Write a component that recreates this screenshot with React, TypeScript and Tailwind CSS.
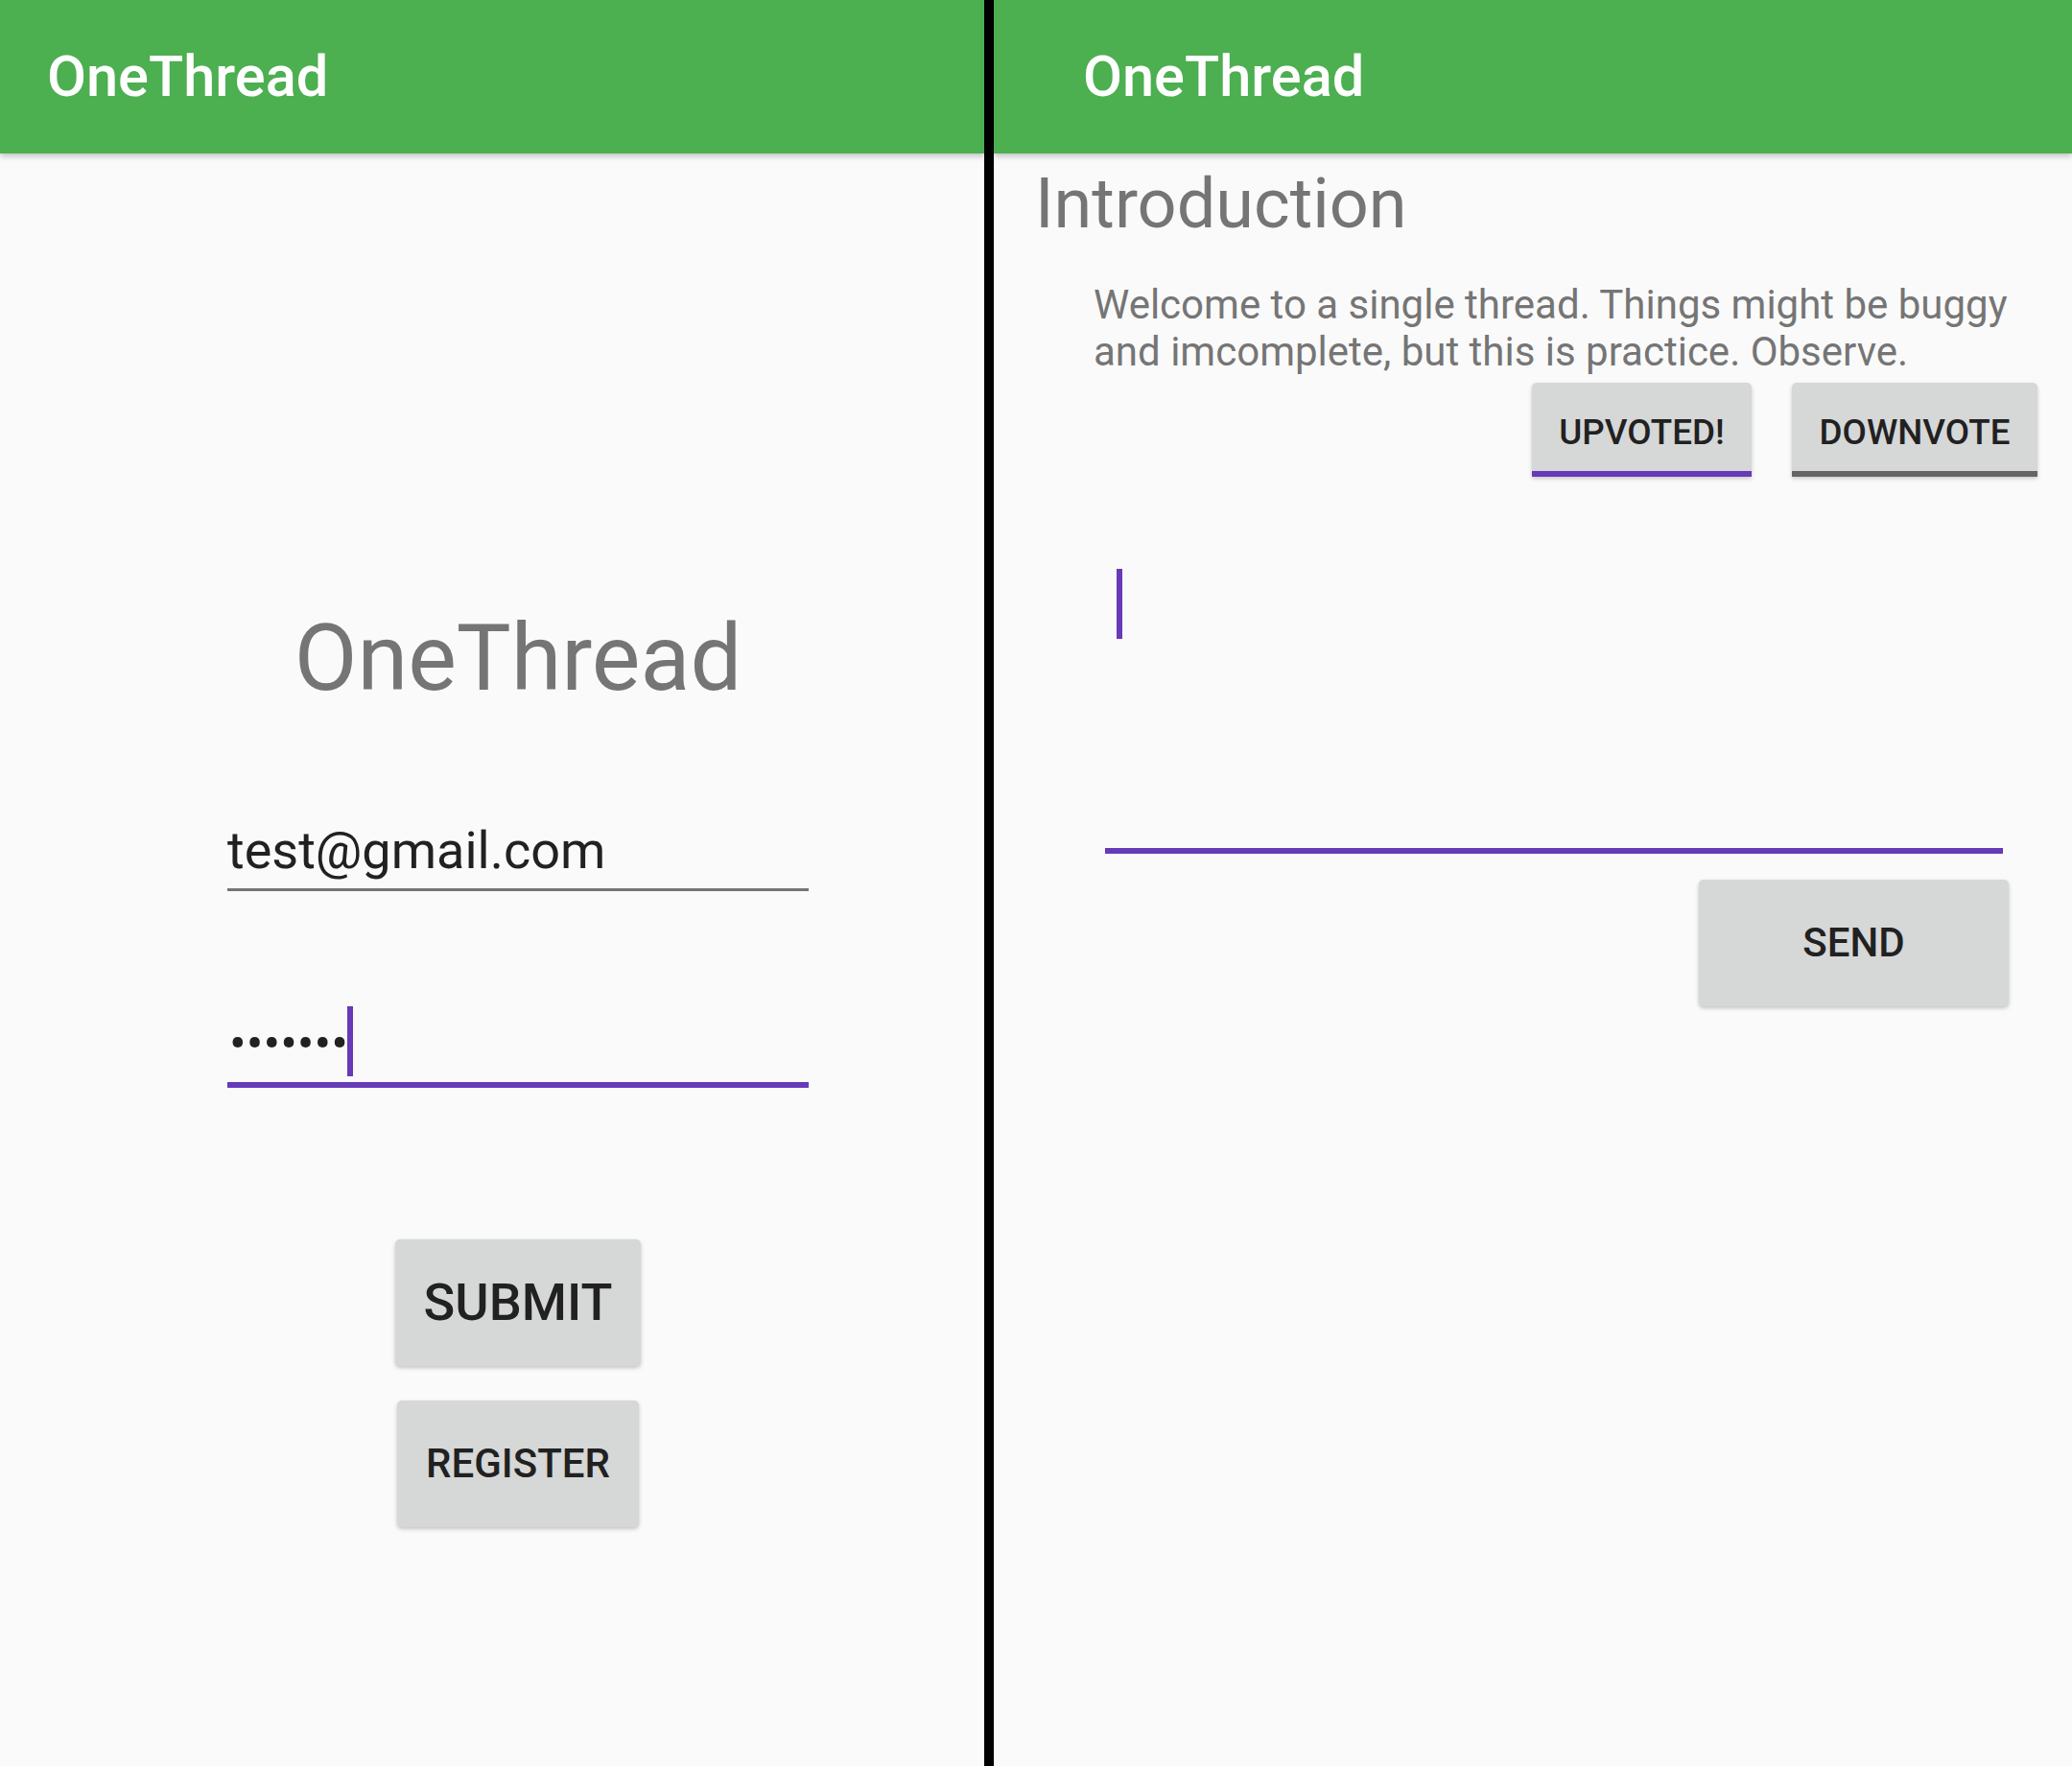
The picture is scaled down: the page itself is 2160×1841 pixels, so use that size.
import React from "react";

function Header({ pad }: { pad: string }) {
  return (
    <div
      className={`relative z-10 flex h-[160px] w-full shrink-0 items-center bg-[#4caf50] shadow-[0_3px_6px_rgba(0,0,0,0.22)] ${pad}`}
    >
      <span className="text-[59.5px] font-medium leading-[70px] text-white">OneThread</span>
    </div>
  );
}

function GrayButton({
  label,
  className,
  textClass,
}: {
  label: string;
  className: string;
  textClass: string;
}) {
  return (
    <div
      className={`flex items-center justify-center rounded-[5px] bg-[#d6d7d7] shadow-[0_2px_4px_rgba(0,0,0,0.22)] ${className}`}
    >
      <span className={`font-medium text-[#212121] ${textClass}`}>{label}</span>
    </div>
  );
}

function ToggleButton({ label, width, line }: { label: string; width: string; line: string }) {
  return (
    <div
      className={`flex h-[98px] flex-col overflow-hidden rounded-t-[5px] bg-[#d6d7d7] shadow-[0_2px_4px_rgba(0,0,0,0.2)] ${width}`}
    >
      <div className="flex flex-1 items-center justify-center pt-[10px]">
        <span className="text-[36.75px] font-medium leading-[43px] text-[#212121]">{label}</span>
      </div>
      <div className={`h-[6px] w-full ${line}`} />
    </div>
  );
}

export default function App() {
  return (
    <div className="flex h-[1841px] w-[2160px] overflow-hidden bg-[#fafafa] font-['Roboto','Liberation_Sans',sans-serif]">
      {/* Left phone: login */}
      <div className="flex h-full w-[1026px] shrink-0 flex-col overflow-hidden">
        <Header pad="pl-[49px]" />
        <div className="flex w-[1080px] flex-col items-center">
          <div className="mt-[471px] text-[95.5px] leading-[111px] text-[#757575]">OneThread</div>

          <div className="mt-[114px] flex w-[606px] flex-col">
            <div className="text-[54px] leading-[62px] text-[#212121]">test@gmail.com</div>
            <div className="mt-[8px] h-[3px] w-full bg-[#757575]" />
          </div>

          <div className="relative mt-[128px] flex w-[606px] flex-col">
            <div className="pl-[2px] text-[52.5px] leading-[62px] text-[#212121]">•••••••</div>
            <div className="absolute left-[125px] top-[-8px] h-[73px] w-[6px] bg-[#673ab7]" />
            <div className="mt-[9px] h-[6px] w-full bg-[#673ab7]" />
          </div>

          <GrayButton
            label="SUBMIT"
            className="mt-[158px] h-[132px] w-[256px]"
            textClass="text-[54px] leading-[64px]"
          />
          <GrayButton
            label="REGISTER"
            className="mt-[36px] h-[132px] w-[252px]"
            textClass="text-[42px] leading-[50px]"
          />
        </div>
      </div>

      {/* Divider */}
      <div className="h-full w-[10px] shrink-0 bg-black" />

      {/* Right phone: thread */}
      <div className="flex h-full flex-1 flex-col">
        <Header pad="pl-[93px]" />
        <div className="ml-[43px] mt-[11px] text-[72px] leading-[84px] text-[#757575]">Introduction</div>
        <p className="ml-[104px] mt-[38px] text-[42px] leading-[49px] text-[#757575]">
          Welcome to a single thread. Things might be buggy
          <br />
          and imcomplete, but this is practice. Observe.
        </p>
        <div className="mt-[8px] flex justify-end gap-[42px] pr-[36px]">
          <ToggleButton label="UPVOTED!" width="w-[229px]" line="bg-[#673ab7]" />
          <ToggleButton label="DOWNVOTE" width="w-[256px]" line="bg-[#646464]" />
        </div>

        <div className="relative ml-[116px] mt-[96px] flex h-[297px] w-[936px] flex-col justify-end">
          <div className="absolute left-[12px] top-0 h-[73px] w-[6px] bg-[#673ab7]" />
          <div className="h-[6px] w-full bg-[#673ab7]" />
        </div>

        <div className="mt-[27px] flex justify-end pr-[66px]">
          <GrayButton
            label="SEND"
            className="h-[132px] w-[323px]"
            textClass="text-[42px] leading-[50px]"
          />
        </div>
      </div>
    </div>
  );
}
